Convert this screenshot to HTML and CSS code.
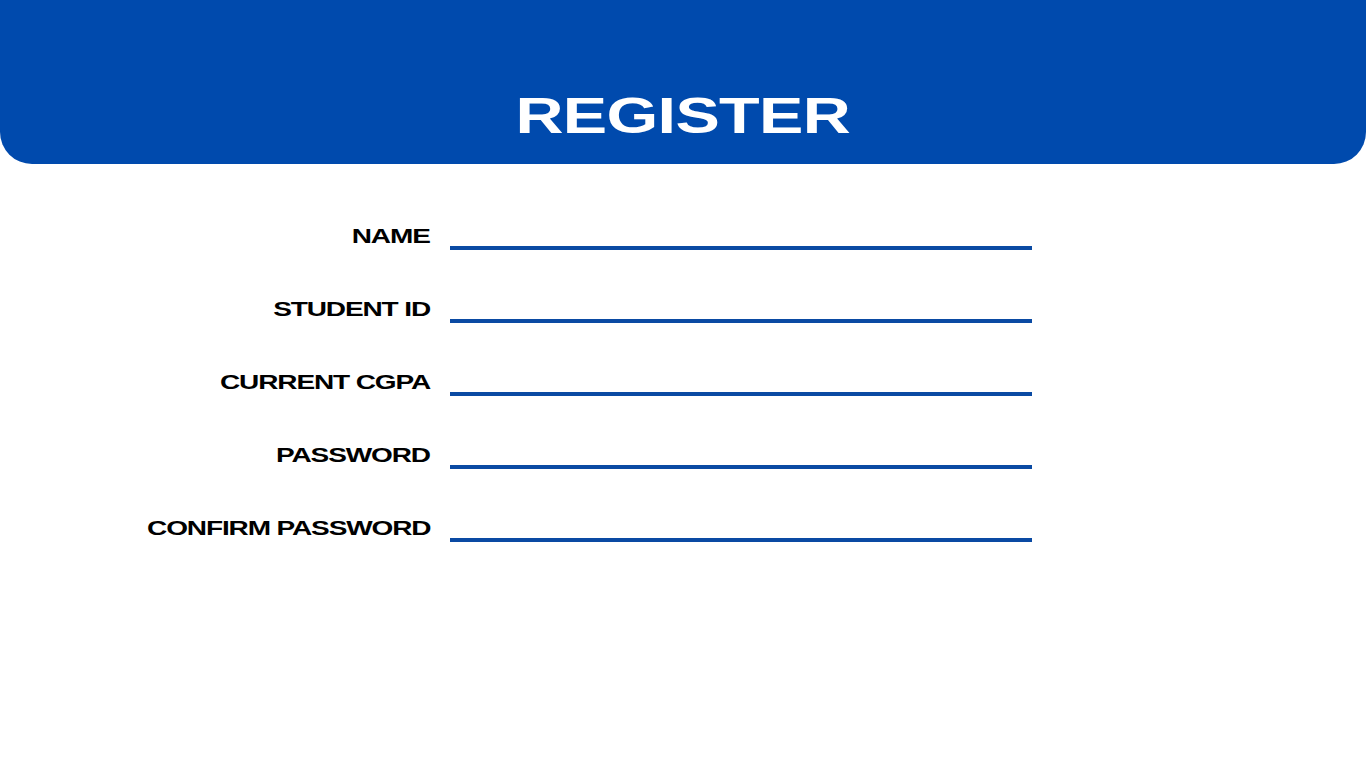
FILE: index.html
```html
<!DOCTYPE html>
<html lang="en">
<head>
  <meta charset="UTF-8">
  <meta name="viewport" content="width=device-width, initial-scale=1.0">
  <title>Register</title>
  <link rel="stylesheet" href="styles.css">
</head>
<body>

  <header class="banner">
    <h1><span>REGISTER</span></h1>
  </header>

  <form class="register-form" id="registerForm">
    <!-- Student details -->
    <label for="name"><span>NAME</span></label>
    <input type="text" id="name">

    <label for="studentId"><span>STUDENT ID</span></label>
    <input type="text" id="studentId">

    <label for="cgpa"><span>CURRENT CGPA</span></label>
    <input type="text" id="cgpa">

    <!-- Password -->
    <label for="password"><span>PASSWORD</span></label>
    <input type="password" id="password">

    <label for="confirm"><span>CONFIRM PASSWORD</span></label>
    <input type="password" id="confirm">
  </form>

</body>
</html>
```

FILE: styles.css
```css
/* Reset and base styling */
* {
  margin: 0;
  padding: 0;
  box-sizing: border-box;
}

body {
  font-family: 'Liberation Sans', Arial, sans-serif;
  background-color: #fff;
  width: 1366px;
  height: 768px;
  overflow: hidden;
}

/* Blue header band */
.banner {
  height: 164px;
  background-color: #004aad;
  border-radius: 0 0 32px 32px;
  display: flex;
  justify-content: center;
  align-items: flex-end;
  padding-bottom: 23px;
}

.banner h1 {
  color: #fff;
  font-size: 50px;
  line-height: 50px;
  font-weight: bold;
}

.banner h1 span {
  display: inline-block;
  transform: scaleX(1.33);
  letter-spacing: -0.5px;
}

/* Form rows */
.register-form {
  display: grid;
  grid-template-columns: 430px 582px;
  column-gap: 20px;
  row-gap: 33px;
  margin-top: 46px;
}

.register-form label {
  align-self: end;
  text-align: right;
  font-size: 20px;
  line-height: 20px;
  font-weight: bold;
  color: #000;
  margin-bottom: 4px;
  white-space: nowrap;
}

.register-form label span {
  display: inline-block;
  transform: scaleX(1.4);
  transform-origin: right center;
  letter-spacing: -0.8px;
}

.register-form input {
  height: 40px;
  width: 100%;
  border: none;
  border-bottom: 4px solid #0a4aa3;
  background: transparent;
  outline: none;
  font-size: 18px;
}
```
